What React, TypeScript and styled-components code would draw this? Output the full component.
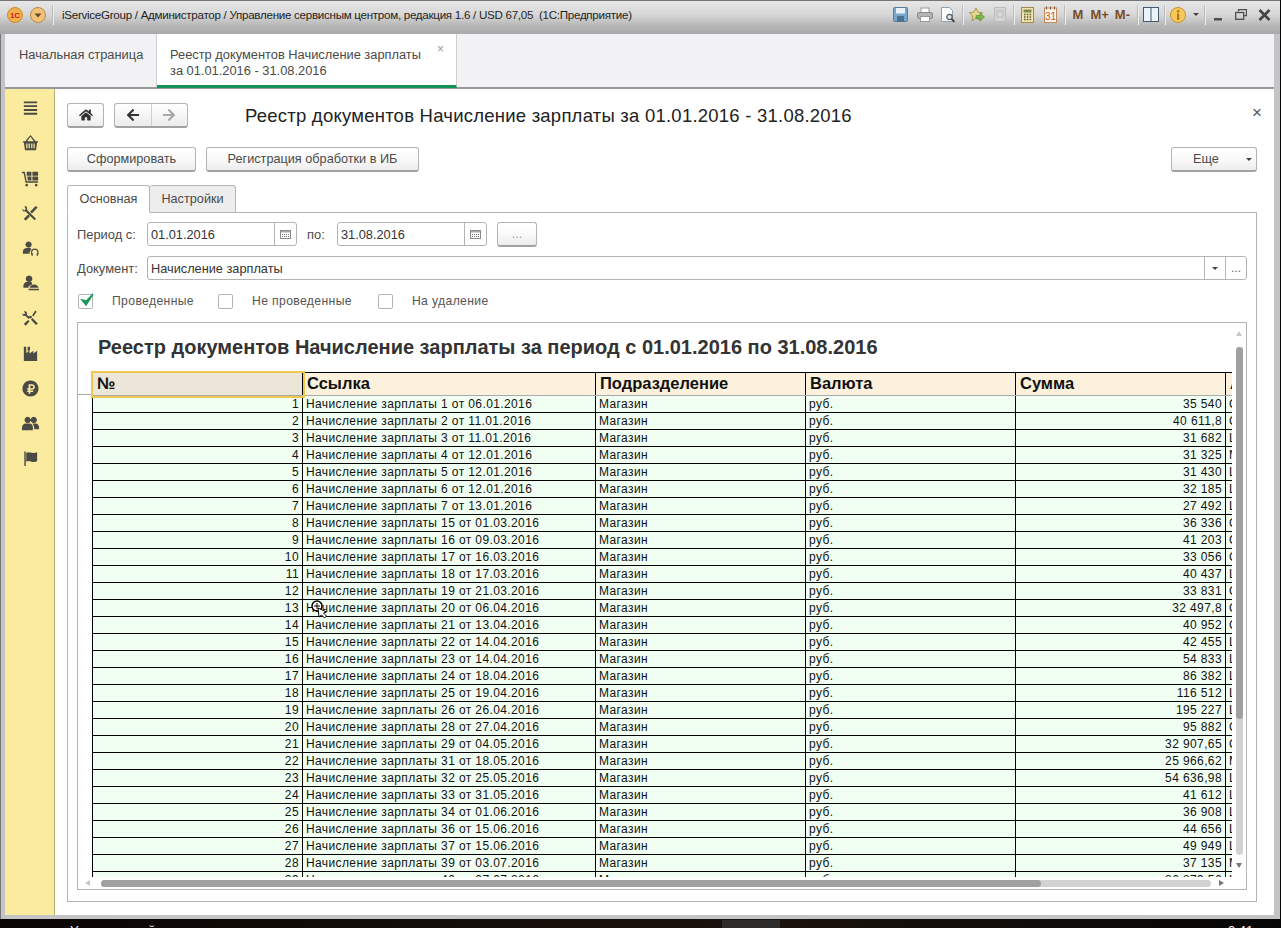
import React from "react";
import styled, { createGlobalStyle } from "styled-components";
import { FaArrowLeft, FaArrowRight, FaHome } from "react-icons/fa";

const uiFont = `"Liberation Sans", Arial, sans-serif`;
const borderGrey = "#b4b4b4";
const textGrey = "#4a4a4a";

const GlobalStyle = createGlobalStyle`
  html, body {
    margin: 0;
    padding: 0;
    background: #000;
  }
  * {
    box-sizing: border-box;
  }
`;

const Page = styled.div`
  width: 1281px;
  height: 928px;
  overflow: hidden;
  display: flex;
  flex-direction: column;
  background: #050505;
  font-family: ${uiFont};
`;

const Window = styled.div`
  width: 1280px;
  height: 919px;
  flex: none;
  display: flex;
  flex-direction: column;
  background: #c4c4c6;
  padding: 0 6px 4px 4px;
  border-top: 1px solid #777;
  border-left: 1px solid #777;
`;

const TitleBar = styled.div`
  height: 33px;
  margin: 0 -6px 0 -5px;
  padding: 0 0 0 7px;
  flex: none;
  display: flex;
  align-items: center;
  padding-bottom: 6px;
  background: linear-gradient(#e6e6e6 0, #d8d8d8 40%, #b4b4b4 78%, #a9a9ab 100%);
`;

const TitleText = styled.div`
  margin-left: 9px;
  font-size: 11.6px;
  letter-spacing: -0.28px;
  color: #1f1f1f;
  white-space: pre;
`;

const Tool = styled.span<{ $ml: number }>`
  display: inline-flex;
  flex: none;
  margin-left: ${(p) => p.$ml}px;
  align-items: center;
`;

const ToolSep = styled.span<{ $ml: number }>`
  flex: none;
  width: 1px;
  height: 20px;
  margin-left: ${(p) => p.$ml}px;
  background: #bcbcbc;
  box-shadow: 1px 0 0 #eee;
`;

const MemoryLabel = styled.span<{ $ml: number }>`
  flex: none;
  margin-left: ${(p) => p.$ml}px;
  font-size: 13px;
  font-weight: 700;
  color: #7a4b2a;
`;

const Spacer = styled.div`
  flex: 1;
`;

const TabBar = styled.div`
  height: 55px;
  flex: none;
  display: flex;
  background: #f2f2f4;
  border-bottom: 2px solid #98989a;
`;

const HomeTab = styled.div`
  width: 152px;
  padding: 13px 0 0 14px;
  font-size: 12.85px;
  color: ${textGrey};
  border-right: 1px solid #cfcfcf;
`;

const OpenTab = styled.div`
  position: relative;
  width: 300px;
  height: 54px;
  padding: 13px 0 0 13px;
  background: #fff;
  border-right: 1px solid #cfcfcf;
  border-bottom: 3px solid #12915a;
  font-size: 12.85px;
  line-height: 16px;
  color: ${textGrey};
`;

const TabClose = styled.span`
  position: absolute;
  top: 7px;
  right: 12px;
  font-size: 12px;
  color: #9a9a9a;
`;

const Body = styled.div`
  flex: 1;
  min-height: 0;
  display: flex;
`;

const Sidebar = styled.div`
  width: 50px;
  flex: none;
  padding: 10px 0 0 1px;
  display: flex;
  flex-direction: column;
  align-items: center;
  gap: 16px;
  background: #fbeb9f;
  border-right: 1px solid #b9ae70;
`;

const SideIcon = styled.svg`
  width: 19px;
  height: 19px;
  fill: #4b4b45;
  flex: none;
`;

const Content = styled.div`
  flex: 1;
  min-width: 0;
  display: flex;
  flex-direction: column;
  background: #fff;
  padding: 14px 17px 13px 12px;
`;

const HeaderRow = styled.div`
  height: 25px;
  flex: none;
  display: flex;
  align-items: center;
`;

const PageTitle = styled.div`
  margin-left: 57px;
  flex: 1;
  font-size: 18.5px;
  letter-spacing: 0.23px;
  color: #222;
`;

const CloseMark = styled.span`
  font-size: 17px;
  line-height: 17px;
  color: #555;
  margin: -6px -5px 0 0;
`;

const Button = styled.div<{ $w: number; $muted?: boolean; $ml?: number }>`
  width: ${(p) => p.$w}px;
  height: 25px;
  flex: none;
  margin-left: ${(p) => p.$ml ?? 0}px;
  display: flex;
  align-items: center;
  justify-content: center;
  font-size: 12.7px;
  color: ${(p) => (p.$muted ? "#999" : textGrey)};
  background: linear-gradient(#fff, #f9f9f9 55%, #ececec);
  border: 1px solid ${borderGrey};
  border-bottom: 2px solid #a2a2a2;
  border-radius: 3px;
`;

const NavGroup = styled.div`
  margin-left: 10px;
  width: 74px;
  height: 25px;
  display: flex;
  border: 1px solid ${borderGrey};
  border-bottom: 2px solid #a2a2a2;
  border-radius: 3px;
  background: linear-gradient(#fff, #ececec);
`;

const NavCell = styled.div<{ $dim?: boolean }>`
  flex: 1;
  display: flex;
  align-items: center;
  justify-content: center;
  font-size: 14px;
  color: ${(p) => (p.$dim ? "#a8a8a8" : "#333")};
  & + & {
    border-left: 1px solid #cfcfcf;
  }
`;

const CommandBar = styled.div`
  margin-top: 19px;
  flex: none;
  display: flex;
  gap: 10px;
`;

const MoreButton = styled(Button)`
  margin-left: auto;
  position: relative;
  padding-right: 16px;
`;

const MoreArrow = styled.span`
  position: absolute;
  right: 4px;
  top: 10px;
  width: 0;
  height: 0;
  border-left: 3px solid transparent;
  border-right: 3px solid transparent;
  border-top: 3px solid #444;
`;

const TabStrip = styled.div`
  margin-top: 13px;
  height: 28px;
  flex: none;
  display: flex;
  margin-bottom: -1px;
`;

const FormTab = styled.div<{ $active?: boolean; $w: number }>`
  width: ${(p) => p.$w}px;
  height: 28px;
  display: flex;
  align-items: center;
  justify-content: center;
  font-size: 12.7px;
  color: ${textGrey};
  border: 1px solid ${borderGrey};
  border-left-width: ${(p) => (p.$active ? 1 : 0)}px;
  border-bottom-color: ${(p) => (p.$active ? "#fff" : borderGrey)};
  border-radius: 3px 3px 0 0;
  background: ${(p) => (p.$active ? "#fff" : "#ededed")};
  position: relative;
  z-index: 1;
`;

const TabPanel = styled.div`
  flex: 1;
  min-height: 0;
  display: flex;
  flex-direction: column;
  border: 1px solid ${borderGrey};
  padding: 9px 9px 11px 9px;
`;

const FieldRow = styled.div`
  height: 24px;
  flex: none;
  display: flex;
  align-items: center;
  margin-bottom: 10px;
`;

const FieldLabel = styled.div<{ $w: number; $pl?: number }>`
  width: ${(p) => p.$w}px;
  flex: none;
  padding-left: ${(p) => p.$pl ?? 0}px;
  font-size: 12.9px;
  color: ${textGrey};
`;

const Input = styled.div<{ $w?: number }>`
  width: ${(p) => (p.$w ? `${p.$w}px` : "auto")};
  flex: ${(p) => (p.$w ? "none" : 1)};
  height: 24px;
  display: flex;
  align-items: stretch;
  border: 1px solid ${borderGrey};
  border-radius: 3px;
  font-size: 12.75px;
  color: #333;
`;

const InputValue = styled.div`
  flex: 1;
  padding-left: 3px;
  display: flex;
  align-items: center;
`;

const InputAddon = styled.div<{ $w: number }>`
  width: ${(p) => p.$w}px;
  flex: none;
  display: flex;
  align-items: center;
  justify-content: center;
  border-left: 1px solid ${borderGrey};
  font-size: 12px;
  color: #666;
`;

const SmallArrow = styled.span`
  width: 0;
  height: 0;
  border-left: 3px solid transparent;
  border-right: 3px solid transparent;
  border-top: 3px solid #444;
`;

const CheckRow = styled.div`
  height: 16px;
  flex: none;
  display: flex;
  align-items: center;
  margin: 3px 0 13px 1px;
`;

const CheckBox = styled.span<{ $ml?: number }>`
  position: relative;
  flex: none;
  width: 15px;
  height: 15px;
  margin-left: ${(p) => p.$ml ?? 0}px;
  border: 1px solid ${borderGrey};
  border-radius: 2px;
`;

const CheckMark = styled.svg`
  position: absolute;
  left: 0;
  top: -3px;
  width: 17px;
  height: 17px;
`;

const CheckLabel = styled.span`
  margin-left: 19px;
  font-size: 12.2px;
  letter-spacing: 0.36px;
  color: #555;
  white-space: nowrap;
`;

const Report = styled.div`
  position: relative;
  flex: 1;
  min-height: 0;
  border: 1px solid ${borderGrey};
`;

const Viewport = styled.div`
  position: relative;
  width: 1154px;
  height: 554px;
  overflow: hidden;
  padding-left: 14px;
`;

const ReportTitle = styled.div`
  height: 49px;
  padding: 12px 0 0 6px;
  font-size: 20px;
  line-height: 24px;
  font-weight: 700;
  color: #333;
  white-space: nowrap;
`;

const FreezeLine = styled.div`
  position: absolute;
  left: 0;
  right: 0;
  top: 71px;
  height: 1px;
  background: #aaa;
`;

const Table = styled.table`
  position: relative;
  border-collapse: collapse;
  table-layout: fixed;
  width: 1189px;
  font-size: 12px;
  color: #111;
`;

const Th = styled.th<{ $focused?: boolean }>`
  height: 23px;
  padding: 0 3px 2px 4px;
  text-align: left;
  font-size: 16.5px;
  line-height: 20px;
  font-weight: 700;
  color: #111;
  background: ${(p) => (p.$focused ? "#ece6d8" : "#fbf1dc")};
  border: 1px solid #000;
  border-bottom-color: #aaa;
  white-space: nowrap;
  overflow: hidden;
  outline: ${(p) => (p.$focused ? "2px solid #efc94c" : "none")};
  outline-offset: 0;
`;

const Td = styled.td<{ $right?: boolean }>`
  height: 17px;
  padding: 0 3px;
  line-height: 15px;
  font-size: 12px;
  letter-spacing: 0.39px;
  text-align: ${(p) => (p.$right ? "right" : "left")};
  background: #f1fff3;
  border: 1px solid #000;
  white-space: nowrap;
  overflow: hidden;
`;

const ScrollTrack = styled.div<{ $vertical?: boolean }>`
  position: absolute;
  background: #d2d2d2;
  border-radius: 4px;
  ${(p) =>
    p.$vertical
      ? "left: 1158px; top: 24px; width: 7px; height: 508px;"
      : "left: 23px; top: 557px; width: 1110px; height: 7px;"}
`;

const ScrollThumb = styled.div<{ $vertical?: boolean }>`
  background: #a0a0a0;
  border-radius: 4px;
  ${(p) => (p.$vertical ? "width: 7px; height: 372px;" : "height: 7px; width: 940px;")}
`;

const ScrollArrow = styled.span<{ $dir: "up" | "down" | "left" | "right" }>`
  position: absolute;
  width: 0;
  height: 0;
  ${(p) =>
    ({
      up: "left: 1158px; top: 8px; border: 3.5px solid transparent; border-bottom: 5px solid #c8c8c8; border-top: 0;",
      down: "left: 1158px; top: 540px; border: 3.5px solid transparent; border-top: 5px solid #777; border-bottom: 0;",
      left: "left: 7px; top: 557px; border: 3.5px solid transparent; border-right: 5px solid #c8c8c8; border-left: 0;",
      right: "left: 1141px; top: 557px; border: 3.5px solid transparent; border-left: 5px solid #777; border-right: 0;",
    })[p.$dir]}
`;

const Cursor = styled.svg`
  position: absolute;
  left: 233px;
  top: 277px;
  width: 17px;
  height: 20px;
`;

const Taskbar = styled.div`
  flex: 1;
  position: relative;
  overflow: hidden;
  background: linear-gradient(90deg, #0a0604, #1a120c 60%, #060606);
  color: #f2f2f2;
  font-size: 13px;
`;

const TaskText = styled.div<{ $left: number }>`
  position: absolute;
  left: ${(p) => p.$left}px;
  top: 4px;
  white-space: nowrap;
`;

const TaskPatch = styled.div`
  position: absolute;
  left: 722px;
  top: 1px;
  width: 58px;
  height: 8px;
  background: #2e2c2a;
`;

const rows: [number, number, string, string, string][] = [
  [1, 1, "06.01.2016", "35 540", "О"],
  [2, 2, "11.01.2016", "40 611,8", "О"],
  [3, 3, "11.01.2016", "31 682", "Ш"],
  [4, 4, "12.01.2016", "31 325", "М"],
  [5, 5, "12.01.2016", "31 430", "Ш"],
  [6, 6, "12.01.2016", "32 185", "Ш"],
  [7, 7, "13.01.2016", "27 492", "Ш"],
  [8, 15, "01.03.2016", "36 336", "О"],
  [9, 16, "09.03.2016", "41 203", "О"],
  [10, 17, "16.03.2016", "33 056", "О"],
  [11, 18, "17.03.2016", "40 437", "Ш"],
  [12, 19, "21.03.2016", "33 831", "О"],
  [13, 20, "06.04.2016", "32 497,8", "О"],
  [14, 21, "13.04.2016", "40 952", "О"],
  [15, 22, "14.04.2016", "42 455", "Ш"],
  [16, 23, "14.04.2016", "54 833", "Ш"],
  [17, 24, "18.04.2016", "86 382", "Ш"],
  [18, 25, "19.04.2016", "116 512", "Ш"],
  [19, 26, "26.04.2016", "195 227", "Ш"],
  [20, 28, "27.04.2016", "95 882", "О"],
  [21, 29, "04.05.2016", "32 907,65", "О"],
  [22, 31, "18.05.2016", "25 966,62", "М"],
  [23, 32, "25.05.2016", "54 636,98", "Ш"],
  [24, 33, "31.05.2016", "41 612", "Ш"],
  [25, 34, "01.06.2016", "36 908", "Ш"],
  [26, 36, "15.06.2016", "44 656", "Ш"],
  [27, 37, "15.06.2016", "49 949", "Ш"],
  [28, 39, "03.07.2016", "37 135", "М"],
  [29, 40, "07.07.2016", "86 879,56", "Ш"],
];

const sideIcons: React.ReactNode[] = [
  <path key="m" d="M3 2.500h14v2H3zM3 6.500h14v2H3zM3 10.500h14v2H3zM3 14.500h14v2H3z" />,
  <path key="b" fillRule="evenodd" d="M10 1l5.500 6.500H18V9h-1l-1.200 8H4.200L3 9H2V7.500h2.500zM10 3L6.500 7.500h7zM5.500 10v5h1.300v-5zM8 10v5h1.300v-5zM10.700 10v5H12v-5zM13.200 10v5h1.300v-5z" />,
  <path key="c" d="M1 3h3l2 10h12v1.500H4.800L2.800 4.500H1zM6 3h5v4H6zM12 3h6v4h-6zM6.500 8h4.500v4H7.300zM12 8h6v4h-6zM6 15.500a1.500 1.500 0 1 0 .01 0zM16 15.500a1.500 1.500 0 1 0 .01 0z" />,
  <path key="t" d="M3.500 2l2.700 1 .3 3.200 9.300 9.300-1.600 1.600-9.300-9.300L2 7.500 1.200 5l2.200 1.800L5 5.300zM15.500 2l2 1.800-6 6.200-1.900-1.900zM7.600 11.100l1.800 1.800-4.400 4.600-2-2z" />,
  <path key="h" d="M8 2.500a3.300 3.300 0 1 1-.01 0zM6 9.500h4l1 1.500c-1.300 1-2 2.300-2 4v.5H2v-2.500c0-2 2-3.500 4-3.500zM14.500 10a4 4 0 0 1 4 4v2h-1.300v-2a2.700 2.700 0 0 0-5.400 0v2h-1.300v-2a4 4 0 0 1 4-4zM11 15h1.500v2.500H11zM16.500 15H18v2.500h-1.500z" />,
  <path key="u" d="M8.500 1.500a3.500 3.500 0 1 1-.01 0zM6 8.500h5l1 2.500c-2.500.5-4 1.700-4.500 3.500H2.500v-2c0-2 1.500-4 3.500-4zM14 11c2.500 0 4 1.500 4.500 3.500H9c.5-2 2.500-3.500 5-3.500zM8 15.500h11V17H8z" />,
  <path key="s" d="M3 2l3 1 .3 3 3 3-1.400 1.400-3-3L2 7l-.8-2.500L3 5.800 4.300 4.500zM15 1.500l1.500 1.500-3.500 5-1.300-1.200zM12 9.500l5 5c.8.8 0 2.500-1.500 2l-5-5.200zM7.500 11.500l1.500 1.500-4 4.500-2-2zM10 7a1.500 1.500 0 1 1-.01 0z" />,
  <path key="f" d="M3 3h2.500v6.500L9 7v3l4-3v3l4-3v11H3zM7 3h2.500v3.200L7 8z" />,
  <path key="r" fillRule="evenodd" d="M10 1.500a8.500 8.500 0 1 1-.01 0zM8 5.500v4.200H6.500v1.500H8v1H6.500v1.500H8v1.800h1.800v-1.800h3v-1.500h-3v-1h1.700c2.300 0 3-1.300 3-2.900s-1-2.800-3-2.800zM9.800 7h1.600c.9 0 1.400.5 1.400 1.300s-.5 1.400-1.400 1.400H9.800z" />,
  <path key="p" d="M7 3a3.300 3.300 0 1 1-.01 0zM13.500 3a3.300 3.300 0 1 1-.01 0zM5 10h4.500c2 .5 3 2 3 4v3H1v-2.500C1 12 3 10 5 10zM12 10h3.500c2 0 3.500 2 3.500 4v2h-5c0-2.500-.5-4.500-2-6z" />,
  <path key="l" d="M3.500 2.500H5V18H3.500zM5.500 4c2-1.200 4-.5 6 0s3.500.3 5.500-.5v9.500c-2 1-4 1-6 .3s-3.500-.9-5.500 0z" />,
];

const CalendarGlyph = () => (
  <svg width="11" height="9" viewBox="0 0 11 9">
    <rect x=".5" y=".5" width="10" height="8" fill="#fff" stroke="#8a8a8a" />
    <rect x="1" y="1" width="9" height="1.500" fill="#aaa" />
    <path d="M2 4.500h7M2 6.500h7" stroke="#777" strokeDasharray="1 1" />
  </svg>
);

const App = () => (
  <Page>
    <GlobalStyle />
    <Window>
      <TitleBar>
        <svg width="16" height="16" viewBox="0 0 16 16">
          <circle cx="8" cy="8" r="7.5" fill="#f4b04a" stroke="#c98a2c" />
          <text x="8" y="11" textAnchor="middle" fontSize="8" fontWeight="700" fontFamily="Liberation Sans" fill="#c8201c">1C</text>
        </svg>
        <Tool $ml={7}>
          <svg width="16" height="16" viewBox="0 0 16 16">
            <circle cx="8" cy="8" r="7.5" fill="#f3c27a" stroke="#b98a44" />
            <path d="M4.500 6.500h7L8 10.500z" fill="#6b4a24" />
          </svg>
        </Tool>
        <ToolSep $ml={6} />
        <TitleText>iServiceGroup / Администратор / Управление сервисным центром, редакция 1.6 / USD 67,05  (1С:Предприятие)</TitleText>
        <Spacer />
        <Tool $ml={0}>
          <svg width="15" height="15" viewBox="0 0 15 15">
            <rect x=".5" y=".5" width="14" height="14" rx="1" fill="#7ba6cc" stroke="#5a7c9c" />
            <rect x="3" y="1" width="9" height="5.500" fill="#e8f0f6" />
            <rect x="4" y="9" width="7" height="5.500" fill="#4a7092" />
          </svg>
        </Tool>
        <Tool $ml={9}>
          <svg width="16" height="15" viewBox="0 0 16 15">
            <rect x="4" y="1" width="8" height="5" fill="#fff" stroke="#999" />
            <rect x=".5" y="5.500" width="15" height="6" rx="1.500" fill="#b4b4b4" stroke="#888" />
            <rect x="3.500" y="9.500" width="9" height="5" fill="#fff" stroke="#999" />
          </svg>
        </Tool>
        <Tool $ml={7}>
          <svg width="16" height="16" viewBox="0 0 16 16">
            <path d="M1.500 .5h8l3 3v11h-11z" fill="#fdfdfd" stroke="#8aa0b4" />
            <circle cx="9.500" cy="10" r="2.700" fill="#dfe8ef" stroke="#555" strokeWidth="1.200" />
            <path d="M11.500 12l3 3" stroke="#444" strokeWidth="1.800" />
          </svg>
        </Tool>
        <ToolSep $ml={6} />
        <Tool $ml={6}>
          <svg width="16" height="16" viewBox="0 0 16 16">
            <path d="M7 .8l2 4.400 4.700.5-3.500 3.200 1 4.700L7 11.200l-4.200 2.400 1-4.700L.3 5.700 5 5.200z" fill="#e6d890" stroke="#a89a4c" />
            <path d="M7 8.500h4V6l4.500 4-4.500 4v-2.500H7z" fill="#7ab648" stroke="#4d8428" strokeWidth=".6" />
          </svg>
        </Tool>
        <Tool $ml={9}>
          <svg width="12" height="15" viewBox="0 0 12 15">
            <rect x=".5" y=".5" width="11" height="14" fill="#d6d6d6" stroke="#bdbdbd" />
            <rect x="3" y="4" width="6" height="6" fill="none" stroke="#bababa" />
          </svg>
        </Tool>
        <ToolSep $ml={7} />
        <Tool $ml={7}>
          <svg width="13" height="16" viewBox="0 0 13 16">
            <rect x=".5" y=".5" width="12" height="15" fill="#f2e3a8" stroke="#a08a48" />
            <rect x="2.500" y="2.500" width="8" height="3" fill="#7c8a4e" />
            <path d="M3 7.500h1.500M5.800 7.500h1.500M8.600 7.500h1.500M3 10h1.500M5.800 10h1.500M8.600 10h1.500M3 12.500h1.500M5.800 12.500h1.500M8.600 12.500h1.500" stroke="#5a5a3c" strokeWidth="1.400" />
          </svg>
        </Tool>
        <Tool $ml={10}>
          <svg width="13" height="17" viewBox="0 0 13 17">
            <rect x=".5" y="2" width="12" height="14.500" fill="#fdf4e6" stroke="#c08a60" />
            <path d="M2.500 .5v3M6.500 .5v3M10.500 .5v3" stroke="#8a5a3a" />
            <text x="6.500" y="14" textAnchor="middle" fontSize="10" fontFamily="Liberation Sans" fill="#d2502a">31</text>
          </svg>
        </Tool>
        <ToolSep $ml={7} />
        <MemoryLabel $ml={8}>M</MemoryLabel>
        <MemoryLabel $ml={7}>M+</MemoryLabel>
        <MemoryLabel $ml={6}>M-</MemoryLabel>
        <ToolSep $ml={7} />
        <Tool $ml={5}>
          <svg width="16" height="15" viewBox="0 0 16 15">
            <rect x=".5" y=".5" width="15" height="14" fill="#eaf2fa" stroke="#44596e" />
            <path d="M8 0v15" stroke="#44596e" />
          </svg>
        </Tool>
        <ToolSep $ml={5} />
        <Tool $ml={5}>
          <svg width="16" height="16" viewBox="0 0 16 16">
            <circle cx="8" cy="8" r="7.500" fill="#f6c95a" stroke="#c49328" />
            <rect x="7" y="6.500" width="2.200" height="6.500" fill="#b5741e" />
            <circle cx="8.100" cy="4.200" r="1.300" fill="#b5741e" />
          </svg>
        </Tool>
        <Tool $ml={7}>
          <SmallArrow />
        </Tool>
        <ToolSep $ml={5} />
        <Tool $ml={9}>
          <svg width="8" height="12" viewBox="0 0 8 12">
            <rect x="0" y="9" width="8" height="2.500" fill="#4d4d4d" />
          </svg>
        </Tool>
        <Tool $ml={13}>
          <svg width="12" height="11" viewBox="0 0 12 11" fill="none" stroke="#4d4d4d">
            <path d="M3.500 2.500V.7h8v6H9" strokeWidth="1.300" />
            <rect x=".7" y="3.500" width="8" height="6.800" strokeWidth="1.300" />
          </svg>
        </Tool>
        <Tool $ml={11}>
          <svg width="13" height="12" viewBox="0 0 13 12">
            <path d="M1.500 1l10 10M11.500 1l-10 10" stroke="#444" strokeWidth="2.600" />
          </svg>
        </Tool>
        <Tool $ml={9} />
      </TitleBar>
      <TabBar>
        <HomeTab>Начальная страница</HomeTab>
        <OpenTab>
          Реестр документов Начисление зарплаты
          <br />
          за 01.01.2016 - 31.08.2016
          <TabClose>×</TabClose>
        </OpenTab>
      </TabBar>
      <Body>
        <Sidebar>
          {sideIcons.map((icon, i) => (
            <SideIcon key={i} viewBox="0 0 20 20">
              {icon}
            </SideIcon>
          ))}
        </Sidebar>
        <Content>
          <HeaderRow>
            <Button $w={37}>
              <FaHome size={14} color="#333" />
            </Button>
            <NavGroup>
              <NavCell>
                <FaArrowLeft />
              </NavCell>
              <NavCell $dim>
                <FaArrowRight />
              </NavCell>
            </NavGroup>
            <PageTitle>Реестр документов Начисление зарплаты за 01.01.2016 - 31.08.2016</PageTitle>
            <CloseMark>×</CloseMark>
          </HeaderRow>
          <CommandBar>
            <Button $w={129}>Сформировать</Button>
            <Button $w={213}>Регистрация обработки в ИБ</Button>
            <MoreButton $w={86}>
              Еще
              <MoreArrow />
            </MoreButton>
          </CommandBar>
          <TabStrip>
            <FormTab $active $w={83}>Основная</FormTab>
            <FormTab $w={86}>Настройки</FormTab>
          </TabStrip>
          <TabPanel>
            <FieldRow>
              <FieldLabel $w={70}>Период с:</FieldLabel>
              <Input $w={150}>
                <InputValue>01.01.2016</InputValue>
                <InputAddon $w={22}>
                  <CalendarGlyph />
                </InputAddon>
              </Input>
              <FieldLabel $w={40} $pl={10}>по:</FieldLabel>
              <Input $w={150}>
                <InputValue>31.08.2016</InputValue>
                <InputAddon $w={22}>
                  <CalendarGlyph />
                </InputAddon>
              </Input>
              <Button $w={40} $muted $ml={10}>...</Button>
            </FieldRow>
            <FieldRow>
              <FieldLabel $w={70}>Документ:</FieldLabel>
              <Input>
                <InputValue>Начисление зарплаты</InputValue>
                <InputAddon $w={21}>
                  <SmallArrow />
                </InputAddon>
                <InputAddon $w={21}>...</InputAddon>
              </Input>
            </FieldRow>
            <CheckRow>
              <CheckBox>
                <CheckMark viewBox="0 0 17 17">
                  <path d="M3 8l4 5 7-11-6.500 7z" fill="#1b9a58" stroke="#1b9a58" strokeWidth="1.500" />
                </CheckMark>
              </CheckBox>
              <CheckLabel>Проведенные</CheckLabel>
              <CheckBox $ml={24} />
              <CheckLabel>Не проведенные</CheckLabel>
              <CheckBox $ml={26} />
              <CheckLabel>На удаление</CheckLabel>
            </CheckRow>
            <Report>
              <Viewport>
                <ReportTitle>Реестр документов Начисление зарплаты за период с 01.01.2016 по 31.08.2016</ReportTitle>
                <FreezeLine />
                <Table>
                  <colgroup>
                    <col width={210} />
                    <col width={293} />
                    <col width={210} />
                    <col width={210} />
                    <col width={210} />
                    <col width={56} />
                  </colgroup>
                  <thead>
                    <tr>
                      <Th $focused>№</Th>
                      <Th>Ссылка</Th>
                      <Th>Подразделение</Th>
                      <Th>Валюта</Th>
                      <Th>Сумма</Th>
                      <Th>Автор</Th>
                    </tr>
                  </thead>
                  <tbody>
                    {rows.map(([n, doc, date, sum, author]) => (
                      <tr key={n}>
                        <Td $right>{n}</Td>
                        <Td>Начисление зарплаты {doc} от {date}</Td>
                        <Td>Магазин</Td>
                        <Td>руб.</Td>
                        <Td $right>{sum}</Td>
                        <Td>{author}</Td>
                      </tr>
                    ))}
                  </tbody>
                </Table>
              </Viewport>
              <ScrollArrow $dir="up" />
              <ScrollTrack $vertical>
                <ScrollThumb $vertical />
              </ScrollTrack>
              <ScrollArrow $dir="down" />
              <ScrollArrow $dir="left" />
              <ScrollTrack>
                <ScrollThumb />
              </ScrollTrack>
              <ScrollArrow $dir="right" />
              <Cursor viewBox="0 0 17 20">
                <circle cx="6" cy="6" r="5" fill="#fff" stroke="#000" strokeWidth="1.500" />
                <path d="M3 6h6M6 3v6" stroke="#000" />
                <path d="M7 8l1 9 2.500-2 3 3 2-2-3-3 3-1z" fill="#fff" stroke="#000" />
              </Cursor>
            </Report>
          </TabPanel>
        </Content>
      </Body>
    </Window>
    <Taskbar>
      <TaskPatch />
      <TaskText $left={70}>Управляющий</TaskText>
      <TaskText $left={1228}>9:41</TaskText>
    </Taskbar>
  </Page>
);

export default App;
